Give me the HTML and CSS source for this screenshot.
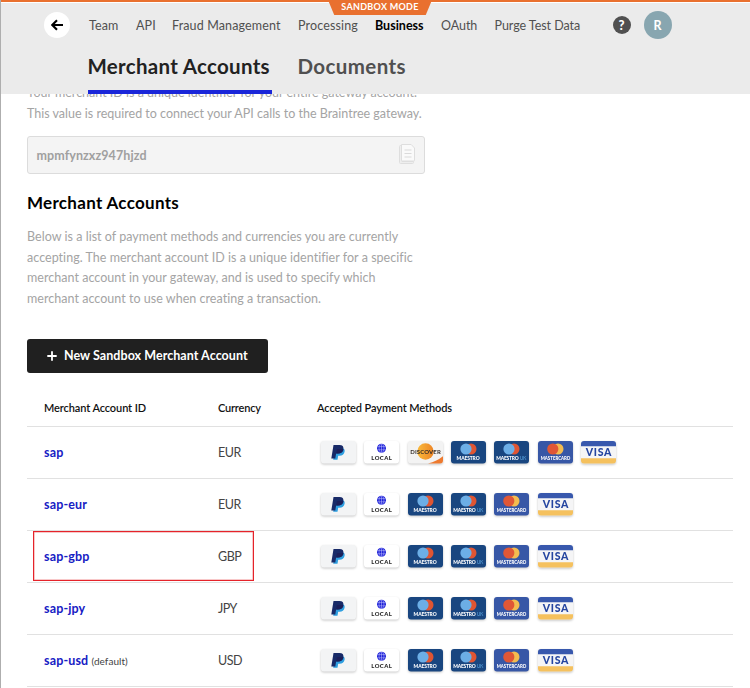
FILE: index.html
```html
<!DOCTYPE html>
<html lang="en">
<head>
<meta charset="utf-8">
<title>Merchant Accounts</title>
<link rel="stylesheet" href="styles.css">
</head>
<body>
<svg class="paints" aria-hidden="true"><linearGradient id="sun"><stop offset="0" stop-color="#f9b93b"/><stop offset="1" stop-color="#ed8425"/></linearGradient></svg>
<svg class="symbols" aria-hidden="true">
  <symbol id="paypal" viewBox="0 0 35 23">
    <rect width="35" height="22.5" rx="3" fill="#f3f4f5"/>
    <path d="M14 7h6.500c2.400 0 3.600 1.500 3.100 3.800-.6 2.800-2.300 4-5 4h-1.400l-.7 4h-4.300z" fill="#2f9fe0"/>
    <path d="M12.500 4h6c3 0 4.300 1.500 3.800 4.100-.6 3-2.600 4.500-5.500 4.500h-1.700l-.8 4.900h-4z" fill="#182a68"/>
    <path d="M15.200 12.600l.8-4.100c.1-.4.4-.6.8-.6h3.500c1 0 1.700.1 2.300.4-.6 2.900-2.600 4.300-5.500 4.300z" fill="#1c1f59"/>
  </symbol>
  <symbol id="local" viewBox="0 0 35 23">
    <rect width="35" height="22.5" rx="3" fill="#fff"/>
    <circle cx="17.500" cy="7.200" r="4.500" fill="#2023d8"/>
    <path d="M13.300 5.600h8.400M13.300 8.800h8.400M17.500 2.700v9M16.700 2.800c-2.200 2.600-2.200 6.200 0 8.800M18.300 2.800c2.200 2.600 2.200 6.200 0 8.800" fill="none" stroke="#c9caff" stroke-width=".5"/>
    <text class="card-label heavy" x="7.300" y="18.800" font-size="5.900" textLength="20.500" fill="#252525">LOCAL</text>
  </symbol>
  <symbol id="discover" viewBox="0 0 35 23">
    <rect width="35" height="22.5" rx="3" fill="#f3f3f3"/>
    <circle cx="17.500" cy="10.500" r="8.200" fill="url(#sun)"/>
    <path d="M20 22.500q9-2.500 15-7.300v4.300a3 3 0 0 1-3 3z" fill="#ee7a2f"/>
    <text class="card-label" x="2.200" y="12.600" font-size="6" textLength="30.600" fill="#342d28">DISCOVER</text>
  </symbol>
  <symbol id="maestro" viewBox="0 0 35 23">
    <rect width="35" height="22.5" rx="3" fill="#194680"/>
    <circle cx="20" cy="8" r="5.500" fill="#e05532"/><circle cx="15" cy="8" r="5.600" fill="#6caee6"/>
    <text class="card-label heavy" x="5.600" y="19" font-size="4.900" textLength="23" fill="#fff">MAESTRO</text>
  </symbol>
  <symbol id="maestro-uk" viewBox="0 0 35 23">
    <rect width="35" height="22.5" rx="3" fill="#194680"/>
    <circle cx="20" cy="8" r="5.500" fill="#e05532"/><circle cx="15" cy="8" r="5.600" fill="#6caee6"/>
    <text class="card-label heavy" x="2.200" y="19" font-size="4.900" textLength="22.500" fill="#fff">MAESTRO</text>
    <text class="card-label" x="25.800" y="19" font-size="4.900" textLength="6.500" fill="#4c8fc9">UK</text>
  </symbol>
  <symbol id="mastercard" viewBox="0 0 35 23">
    <rect width="35" height="22.5" rx="3" fill="#3757a6"/>
    <circle cx="20" cy="8" r="5.500" fill="#f3bc50"/><circle cx="14.800" cy="8" r="5.600" fill="#e05736"/>
    <text class="card-label heavy" x="2.700" y="19" font-size="4.700" textLength="29.500" lengthAdjust="spacingAndGlyphs" fill="#fff">MASTERCARD</text>
  </symbol>
  <symbol id="visa" viewBox="0 0 35 23">
    <rect width="35" height="22.5" rx="3" fill="#f5f5f6"/>
    <path d="M0 5.300V3a3 3 0 0 1 3-3h29a3 3 0 0 1 3 3v2.300z" fill="#3858ad"/>
    <path d="M0 17.200v2.300a3 3 0 0 0 3 3h29a3 3 0 0 0 3-3v-2.300z" fill="#f5c15e"/>
    <text class="card-label heavy" x="4.800" y="15" font-size="10.500" textLength="25.500" fill="#2545a0">VISA</text>
  </symbol>
</svg>

<header class="header">
  <div class="mode">SANDBOX MODE</div>
  <div class="topbar">
    <a class="back"><svg width="12" height="12" viewBox="0 0 12 12"><path d="M12 6H1.500M6 1.300L1.300 6 6 10.700" fill="none" stroke="#000" stroke-width="2.100"/></svg></a>
    <nav class="nav">
      <a>Team</a><a>API</a><a>Fraud Management</a><a>Processing</a><a class="current">Business</a><a>OAuth</a><a>Purge Test Data</a>
    </nav>
    <a class="help">?</a>
    <a class="avatar">R</a>
  </div>
  <nav class="tabs"><a class="tab active">Merchant Accounts</a><a class="tab">Documents</a></nav>
</header>

<main class="content">
  <p class="copy intro">Your merchant ID is a unique identifier for your entire gateway account.<br>This value is required to connect your API calls to the Braintree gateway.</p>
  <div class="field"><span>mpmfynzxz947hjzd</span>
    <svg width="16" height="20" viewBox="0 0 16 20"><path d="M.5 2.500q0-1 1-1H3v16h11.500v1q0 1-1 1h-12q-1 0-1-1z" fill="#eee" stroke="#dedede"/><path d="M2.500.5h9.700L15.500 4v12.500q0 .5-.5.500H3q-.5 0-.5-.5z" fill="#fafafa" stroke="#dedede"/><path d="M5.500 6h7M5.500 9.500h7M5.500 13h7" stroke="#dadada"/></svg>
  </div>
  <h2 class="title">Merchant Accounts</h2>
  <p class="copy">Below is a list of payment methods and currencies you are currently<br>accepting. The merchant account ID is a unique identifier for a specific<br>merchant account in your gateway, and is used to specify which<br>merchant account to use when creating a transaction.</p>
  <button class="create"><svg width="10" height="10" viewBox="0 0 10 10"><path d="M5 .3v9.400M.3 5h9.400" stroke="#fff" stroke-width="1.800"/></svg><span>New Sandbox Merchant Account</span></button>

  <div class="table">
    <div class="row head"><span>Merchant Account ID</span><span>Currency</span><span>Accepted Payment Methods</span></div>
    <div class="row"><span><a class="link">sap</a></span><span>EUR</span><span class="cards"><svg><use href="#paypal"/></svg><svg><use href="#local"/></svg><svg><use href="#discover"/></svg><svg><use href="#maestro"/></svg><svg><use href="#maestro-uk"/></svg><svg><use href="#mastercard"/></svg><svg><use href="#visa"/></svg></span></div>
    <div class="row"><span><a class="link">sap-eur</a></span><span>EUR</span><span class="cards"><svg><use href="#paypal"/></svg><svg><use href="#local"/></svg><svg><use href="#maestro"/></svg><svg><use href="#maestro-uk"/></svg><svg><use href="#mastercard"/></svg><svg><use href="#visa"/></svg></span></div>
    <div class="row marked"><span><a class="link">sap-gbp</a></span><span>GBP</span><span class="cards"><svg><use href="#paypal"/></svg><svg><use href="#local"/></svg><svg><use href="#maestro"/></svg><svg><use href="#maestro-uk"/></svg><svg><use href="#mastercard"/></svg><svg><use href="#visa"/></svg></span></div>
    <div class="row"><span><a class="link">sap-jpy</a></span><span>JPY</span><span class="cards"><svg><use href="#paypal"/></svg><svg><use href="#local"/></svg><svg><use href="#maestro"/></svg><svg><use href="#maestro-uk"/></svg><svg><use href="#mastercard"/></svg><svg><use href="#visa"/></svg></span></div>
    <div class="row"><span><a class="link">sap-usd</a> <small>(default)</small></span><span>USD</span><span class="cards"><svg><use href="#paypal"/></svg><svg><use href="#local"/></svg><svg><use href="#maestro"/></svg><svg><use href="#maestro-uk"/></svg><svg><use href="#mastercard"/></svg><svg><use href="#visa"/></svg></span></div>
  </div>
</main>
</body>
</html>
```
FILE: styles.css
```css
*, ::after { box-sizing: border-box; }
html { overflow: hidden; }
body {
  margin: 0;
  height: 688px;
  overflow: hidden;
  border-left: 1px solid #aeaeae;
  background: #fff;
  color: #444;
  font: 12.5px/20px Lato, "Liberation Sans", sans-serif;
}
.paints { position: absolute; width: 0; height: 0; }
.symbols { display: none; }
.card-label { font-family: Lato, sans-serif; font-weight: 700; letter-spacing: 0; }
.card-label.heavy { font-weight: 900; }

.header {
  position: relative;
  z-index: 1;
  height: 94px;
  margin-left: -1px;
  border-top: 2px solid #e9702f;
  background: #ebebeb;
  box-shadow: inset 0 1px #fff, inset 1px 0 #b4b4b4;
}
.mode {
  position: absolute;
  left: 328px;
  top: -2px;
  width: 104px;
  height: 15px;
  background: #e9702f;
  clip-path: polygon(0 0, 100% 0, 94% 100%, 6% 100%);
  color: #fff;
  font-size: 9px;
  font-weight: 700;
  line-height: 14px;
  letter-spacing: .3px;
  text-align: center;
}
.topbar { display: flex; align-items: center; height: 46px; padding-left: 44px; }
.back {
  display: grid;
  place-items: center;
  width: 26px;
  height: 26px;
  border-radius: 50%;
  background: #fff;
}
.nav {
  display: grid;
  grid-template-columns: 47px 36px 126px 77px 66px 53.5px 118px;
  margin-left: 19px;
  padding-top: 2px;
  color: #505050;
  letter-spacing: .14px;
  white-space: nowrap;
}
.nav a:nth-child(n+6) { letter-spacing: -.05px; }
.nav .current { color: #000; font-weight: 700; letter-spacing: 0; }
.help {
  width: 18px;
  height: 18px;
  border-radius: 50%;
  background: #505050;
  color: #fff;
  font-size: 13px;
  font-weight: 900;
  line-height: 18px;
  text-align: center;
}
.avatar {
  width: 28px;
  height: 28px;
  margin-left: 13px;
  border-radius: 50%;
  background: #88a6b0;
  color: #fff;
  font-weight: 700;
  line-height: 29px;
  text-align: center;
}
.tabs { display: flex; gap: 26px; height: 46px; padding-left: 87.5px; }
.tab {
  height: 46px;
  color: #505050;
  font-size: 20.5px;
  font-weight: 700;
  line-height: 36px;
  letter-spacing: .4px;
}
.tab.active { width: 184px; border-bottom: 4px solid #1a26d9; color: #222; letter-spacing: .3px; }

.content { margin-top: -11px; padding: 0 17px 0 26px; }
.copy {
  margin: 0;
  color: #a4a4a4;
  line-height: 20.6px;
  letter-spacing: .03px;
  white-space: nowrap;
}
.copy.intro { letter-spacing: 0; }
.field {
  display: flex;
  align-items: center;
  justify-content: space-between;
  width: 398px;
  height: 38px;
  margin-top: 12px;
  padding: 0 9px 0 8.5px;
  border: 1px solid #dcdcdc;
  border-radius: 3px;
  background: #f4f4f4;
  color: #a0a0a0;
  font-weight: 700;
  letter-spacing: .08px;
}
.field span { padding-top: 2px; }
.field svg { margin-top: -3px; }
.title {
  margin: 17px 0 12px;
  color: #000;
  font-size: 17px;
  font-weight: 700;
  line-height: 24px;
  letter-spacing: .3px;
}
.create {
  display: flex;
  align-items: center;
  gap: 7px;
  width: 241px;
  height: 34px;
  margin-top: 29px;
  padding: 0 20px;
  border: 0;
  border-radius: 3px;
  background: #202020;
  color: #fff;
  font: 700 12.5px/20px Lato, sans-serif;
  letter-spacing: .05px;
  white-space: nowrap;
}
.create span { padding-top: 1px; }
.table { width: 706px; margin-top: 17px; }
.row {
  position: relative;
  display: grid;
  grid-template-columns: 174px 99px 1fr;
  align-items: center;
  height: 52px;
  padding-left: 17px;
  border-bottom: 1px solid #e1e1e1;
}
.row:not(.head) > :not(.cards) { padding-top: 2px; }
.row > :nth-child(2) { letter-spacing: -.5px; }
.row.head { height: 37px; color: #111; font-size: 11px; font-weight: 600; letter-spacing: -.1px; }
.row.head > :nth-child(2) { letter-spacing: -.2px; }
.link { color: #1620c4; font-weight: 700; letter-spacing: .15px; }
.row small { font-size: 10px; letter-spacing: .05px; }
.cards { display: flex; gap: 8.3px; padding-left: 4.2px; }
.cards svg {
  width: 35px;
  height: 23px;
  overflow: visible;
  filter: drop-shadow(0 1px .8px rgba(0, 0, 0, .22));
}
.marked::after {
  content: "";
  position: absolute;
  left: 6px;
  top: 0;
  width: 221px;
  height: 50px;
  border: 1px solid #e5232a;
  box-shadow: inset 0 0 0 .5px rgba(229, 35, 42, .5);
}
```
